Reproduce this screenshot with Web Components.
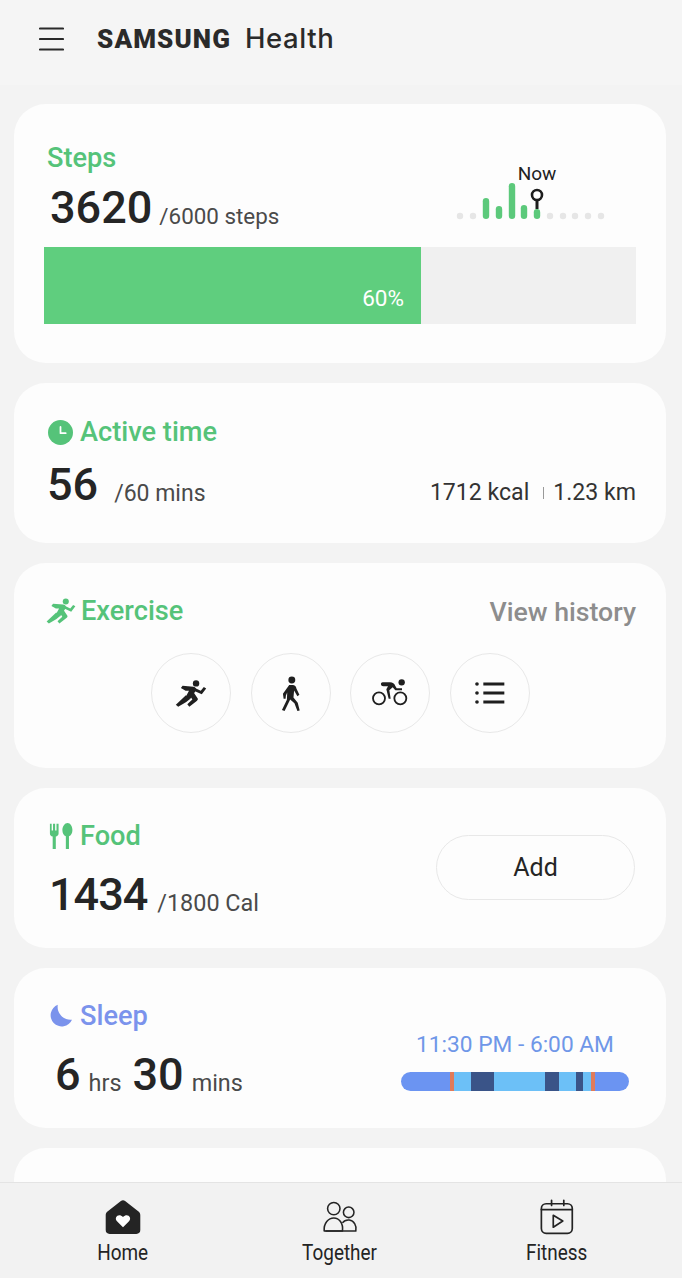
<!DOCTYPE html>
<html lang="en">
<head>
<meta charset="utf-8">
<title>Samsung Health</title>
<style>
  html, body { margin: 0; height: 100%; overflow: hidden; }
  body { font-family: Roboto, "Liberation Sans", sans-serif; color: #252525; background: #f3f3f3; }
  health-app { height: 1278px; }
</style>
</head>
<body>
<health-app>
  <health-header slot="header"></health-header>

  <health-card style="height:259px">
    <steps-panel></steps-panel>
  </health-card>

  <health-card style="height:160px">
    <card-title icon="clock" style="padding-top:33px">Active time</card-title>
    <active-panel></active-panel>
  </health-card>

  <health-card style="height:205px">
    <exercise-panel></exercise-panel>
  </health-card>

  <health-card style="height:160px">
    <food-panel></food-panel>
  </health-card>

  <health-card style="height:160px">
    <card-title icon="moon" tone="#7b93ec">Sleep</card-title>
    <sleep-panel></sleep-panel>
  </health-card>

  <health-card style="height:160px"></health-card>

  <bottom-nav slot="nav">
    <nav-item icon="home" active>Home</nav-item>
    <nav-item icon="together">Together</nav-item>
    <nav-item icon="fitness">Fitness</nav-item>
  </bottom-nav>
</health-app>

<script>
// every icon is drawn in the coordinates of the zoomed reference crop
const ICONS = {
  menu: `<svg viewBox="0 0 25 24" fill="none" stroke="currentColor" stroke-width="2.2" stroke-linecap="round"><path d="M1 1.5h23M1 12h23M1 22.5h23"/></svg>`,
  clock: `<svg viewBox="56 52 72 72"><circle cx="92" cy="88" r="36" fill="currentColor"/><path d="M92 72v18h15" fill="none" stroke="#fff" stroke-width="5" stroke-linecap="round" stroke-linejoin="round"/></svg>`,
  runner: `<svg viewBox="106 98 94 86" fill="currentColor"><circle cx="168" cy="111" r="9.5"/><path d="M128 118l32 3c7 1 10 6 7 12l-17 25-12-8 9-17-10 0-14-8z"/><path d="M138 146l12 11-11 9-24 14-7-6z"/><path d="M147 143l12-8 14 21c1 3 0 5-3 7l-22 17-6-7 15-14z"/><path d="M163 124l19 9 9-11 7 4-13 17-27-12z"/></svg>`,
  walker: `<svg viewBox="415 85 70 112" fill="currentColor"><circle cx="454" cy="100" r="10.5"/><path d="M446 115h12c7 1 9 5 10 11l9 19-6 4-10-17-2 21 13 16 6 24-7 1-9-23-13-12-17 35-8-3 15-31 1-22-4 9-1 10-6 0-2-15z"/></svg>`,
  cyclist: `<svg viewBox="36 26 108 84"><g fill="none" stroke="currentColor" stroke-width="5.5"><circle cx="57" cy="84" r="18"/><circle cx="121" cy="84" r="18"/></g><circle cx="125" cy="36" r="9.5" fill="currentColor"/><path d="M68 36h22c8 0 13 4 16 11l4 7h16v6h-20l-8-9-10 9 4 25h-6l-7-28 5-9H70c-8 0-10-12-2-12z" fill="currentColor"/></svg>`,
  list: `<svg viewBox="1002 104 96 78" fill="currentColor"><circle cx="1011" cy="116" r="5.5"/><circle cx="1011" cy="143" r="5.5"/><circle cx="1011" cy="170" r="5.5"/><path d="M1030 111.500h63v9h-63zM1030 138.500h63v9h-63zM1030 165.500h63v9h-63z"/></svg>`,
  food: `<svg viewBox="58 32 68 78" fill="currentColor"><path d="M60 34h5v20h4V34h6v20h4V34h6v28c0 5-4 8-8 9v36h-9V71c-5-1-8-4-8-9z"/><path d="M111 32c8 0 14 10 14 20 0 9-4 16-10 18v37h-9V70c-6-2-10-9-10-18 0-10 7-20 15-20z"/></svg>`,
  moon: `<svg viewBox="56 40 74 70" fill="currentColor"><path d="M85 42A33 33 0 1 0 127 86A38 38 0 0 1 85 42z"/></svg>`,
  home: `<svg viewBox="127 82 102 102"><path d="M172 88c4-3 8-3 12 0l37 29c4 3 6 6 6 11v42c0 7-4 11-11 11h-76c-7 0-11-4-11-11v-42c0-5 2-8 6-11z" fill="currentColor"/><path d="M178 162l-17-17c-10-11 5-25 17-12 12-13 27 1 17 12z" fill="#fff"/></svg>`,
  together: `<svg viewBox="740 82 116 102" fill="none" stroke="currentColor" stroke-width="5" stroke-linejoin="round"><circle cx="778" cy="106" r="20"/><circle cx="826" cy="118" r="17"/><path d="M747 178c-2-26 14-42 31-42 17 0 31 16 28 42z"/><path d="M806 152c6-8 14-10 22-9 15 2 25 18 21 35h-98"/></svg>`,
  fitness: `<svg viewBox="1366 80 102 106" fill="none" stroke="currentColor" stroke-width="5" stroke-linejoin="round" stroke-linecap="round"><rect x="1371" y="94" width="91" height="87" rx="14"/><path d="M1401 84v15M1437 84v15M1371 111h91" /><path d="M1406 128l28 17-28 18z"/></svg>`
};

function shadow(el, html) {
  el.attachShadow({ mode: 'open' }).innerHTML = html;
}

class HealthApp extends HTMLElement {
  constructor() {
    super();
    shadow(this, `
      <style>
        :host { display: flex; flex-direction: column; background: #f3f3f3; overflow: hidden; }
        header { flex: none; }
        .scroll { flex: 1; min-height: 0; overflow: hidden; display: flex; flex-direction: column; gap: 20px; padding: 19px 16px 0 14px; }
        footer { flex: none; }
      </style>
      <header><slot name="header"></slot></header>
      <div class="scroll"><slot></slot></div>
      <footer><slot name="nav"></slot></footer>`);
  }
}

class HealthHeader extends HTMLElement {
  constructor() {
    super();
    shadow(this, `
      <style>
        :host { display: flex; align-items: center; height: 85px; padding-left: 39px; background: #f5f5f5; color: #2a2a2a; }
        .menu { width: 25px; height: 24px; margin-right: 33px; margin-top: -8px; }
        svg { display: block; }
        .logo { display: flex; align-items: baseline; margin-top: -8px; }
        .brand { font: 900 26px/30px Roboto, sans-serif; letter-spacing: 1.1px; }
        .app { font: 500 27.5px/30px Inter, sans-serif; margin-left: 14px; letter-spacing: .6px; }
      </style>
      <div class="menu">${ICONS.menu}</div>
      <div class="logo"><span class="brand">SAMSUNG</span><span class="app">Health</span></div>`);
  }
}

class HealthCard extends HTMLElement {
  constructor() {
    super();
    shadow(this, `
      <style>
        :host { display: block; flex: none; box-sizing: border-box; background: #fdfdfd; border-radius: 32px; position: relative; }
      </style>
      <slot></slot>`);
  }
}

class CardTitle extends HTMLElement {
  connectedCallback() {
    if (this.shadowRoot) return;
    const name = this.getAttribute('icon');
    const tone = this.getAttribute('tone') || '#55c379';
    const ic = { clock: [25, 25, 34, 7], runner: [30, 28, 32, 5], food: [24, 27, 35, 7], moon: [25, 24, 34, 7] }[name];
    shadow(this, `
      <style>
        :host { display: flex; align-items: center; color: ${tone}; font: 500 27.2px/32px Roboto, sans-serif; padding: 32px 0 0 ${ic[2]}px; }
        .ic { flex: none; display: flex; justify-content: center; margin-right: ${ic[3]}px; }
        svg { display: block; width: 100%; height: 100%; }
      </style>
      <span class="ic" style="width:${ic[0]}px;height:${ic[1]}px">${ICONS[name]}</span>
      <slot></slot>`);
  }
}

class BigStat extends HTMLElement {
  connectedCallback() {
    if (this.shadowRoot) return;
    shadow(this, `
      <style>
        :host { display: inline-flex; align-items: baseline; white-space: nowrap; color: #252525; }
        b { font: 500 45px/50px Roboto, sans-serif; letter-spacing: var(--num-track, 0); }
        span { font: 400 var(--unit-size, 22.4px)/50px Roboto, sans-serif; color: #4a4a4a; margin-left: var(--unit-gap, 7px); position: relative; top: 1px; }
      </style>
      <b>${this.getAttribute('value')}</b><span><slot></slot></span>`);
  }
}

class StepsPanel extends HTMLElement {
  constructor() {
    super();
    const bars = [[486, 198], [499, 206], [512, 183], [524, 205], [537, 209]];
    const dots = [460, 473, 550, 563, 575, 588, 601];
    shadow(this, `
      <style>
        :host { display: block; padding: 38px 30px 0; }
        .top { display: flex; justify-content: space-between; height: 91px; }
        h2 { margin: 0 0 9px 3px; font: 500 27.2px/32px Roboto, sans-serif; color: #55c379; }
        big-stat { margin-left: 6px; }
        svg { display: block; margin: 18px 18px 0 0; overflow: visible; }
        .bar { height: 77px; margin-top: 14px; background: #f0f0f0; display: flex; }
        .fill { width: 377px; background: #5fce7e; color: #fff; font: 400 22.5px/1 Roboto, sans-serif; display: flex; align-items: flex-end; justify-content: flex-end; padding: 0 17px 15px 0; box-sizing: border-box; }
      </style>
      <div class="top">
        <div><h2>Steps</h2><big-stat value="3620">/6000 steps</big-stat></div>
        <svg width="178" height="70" viewBox="440 160 178 70">
          <text x="537" y="180" text-anchor="middle" font-family="Roboto, sans-serif" font-size="19" fill="#222">Now</text>
          ${dots.map(x => `<circle cx="${x}" cy="216" r="3.2" fill="#e6e6e6"/>`).join('')}
          ${bars.map(([x, y]) => `<rect x="${x - 3.2}" y="${y}" width="6.4" height="${219 - y}" rx="3.2" fill="#5cc97b"/>`).join('')}
          <path d="M537 199v10" stroke="#1d1d1d" stroke-width="3"/>
          <circle cx="537" cy="195" r="5" fill="#fff" stroke="#1d1d1d" stroke-width="2.6"/>
        </svg>
      </div>
      <div class="bar"><div class="fill">60%</div></div>`);
  }
}

class ActivePanel extends HTMLElement {
  constructor() {
    super();
    shadow(this, `
      <style>
        :host { display: flex; justify-content: space-between; align-items: baseline; padding: 12px 30px 0 33px; --unit-gap: 16px; --unit-size: 23px; }
        .right { font: 400 23.1px/50px Roboto, sans-serif; color: #333; display: flex; align-items: center; white-space: nowrap; }
        i { width: 1px; height: 12px; background: #999; margin: 0 9px 0 14px; }
      </style>
      <big-stat value="56">/60 mins</big-stat>
      <div class="right">1712 kcal<i></i>1.23 km</div>`);
  }
}

class RoundButton extends HTMLElement {
  connectedCallback() {
    if (this.shadowRoot) return;
    const [w, h] = this.getAttribute('size').split(',');
    shadow(this, `
      <style>
        :host { display: flex; align-items: center; justify-content: center; box-sizing: border-box; width: 80px; height: 80px; border: 1.5px solid #e8e8e8; border-radius: 50%; color: #1f1f1f; }
        span { display: block; width: ${w}px; height: ${h}px; }
        svg { display: block; width: 100%; height: 100%; }
      </style>
      <span>${ICONS[this.getAttribute('icon')]}</span>`);
  }
}

class ExercisePanel extends HTMLElement {
  constructor() {
    super();
    shadow(this, `
      <style>
        :host { display: block; }
        .head { display: flex; justify-content: space-between; align-items: flex-end; padding-right: 30px; }
        a { font: 500 26.7px/32px Roboto, sans-serif; color: #8d8d8d; position: relative; top: 1px; }
        .row { display: flex; justify-content: center; gap: 19.7px; margin-top: 26px; padding-left: 1px; }
      </style>
      <div class="head"><card-title icon="runner">Exercise</card-title><a>View history</a></div>
      <div class="row">
        <round-button icon="runner" size="32,29"></round-button>
        <round-button icon="walker" size="23,37"></round-button>
        <round-button icon="cyclist" size="36,28"></round-button>
        <round-button icon="list" size="32,26"></round-button>
      </div>`);
  }
}

class FoodPanel extends HTMLElement {
  constructor() {
    super();
    shadow(this, `
      <style>
        :host { display: flex; justify-content: space-between; align-items: flex-start; padding-right: 31px; }
        big-stat { margin: 18px 0 0 35px; display: flex; --unit-gap: 10px; --num-track: -1px; --unit-size: 23.4px; }
        button { all: unset; box-sizing: border-box; width: 199px; height: 65px; margin-top: 47px; border: 1.5px solid #e8e8e8; border-radius: 33px; text-align: center; font: 400 25px/62px Roboto, sans-serif; color: #252525; }
      </style>
      <div>
        <card-title icon="food">Food</card-title>
        <big-stat value="1434">/1800 Cal</big-stat>
      </div>
      <button>Add</button>`);
  }
}

class SleepPanel extends HTMLElement {
  constructor() {
    super();
    const segs = [[49, '#6b94f2'], [4, '#e07b5a'], [17, '#6cc0f7'], [23, '#3a5488'], [51, '#6cc0f7'], [14, '#3a5488'], [17, '#6cc0f7'], [7, '#3a5488'], [8, '#6cc0f7'], [4, '#e07b5a'], [34, '#6b94f2']];
    shadow(this, `
      <style>
        :host { display: flex; justify-content: space-between; align-items: flex-start; padding: 18px 37px 0 41px; }
        .val { display: flex; align-items: baseline; white-space: nowrap; font: 400 23.4px/50px Roboto, sans-serif; color: #4a4a4a; }
        b { font: 500 45px/50px Roboto, sans-serif; color: #252525; }
        .val span { margin: 0 11px 0 8px; position: relative; top: 1px; }
        .right { width: 228px; margin-top: -21px; }
        .time { font: 400 22.7px/32px Roboto, sans-serif; color: #6f97e8; text-align: center; white-space: nowrap; }
        .bar { display: flex; height: 19px; border-radius: 10px; overflow: hidden; margin-top: 11px; }
      </style>
      <div class="val"><b>6</b><span>hrs</span><b>30</b><span>mins</span></div>
      <div class="right">
        <div class="time">11:30 PM - 6:00 AM</div>
        <div class="bar">${segs.map(([w, c]) => `<i style="width:${w}px;background:${c}"></i>`).join('')}</div>
      </div>`);
  }
}

class BottomNav extends HTMLElement {
  constructor() {
    super();
    shadow(this, `
      <style>
        :host { display: grid; grid-template-columns: 246px 188px 246px; height: 96px; box-sizing: border-box; border-top: 1.5px solid #e4e4e4; background: #f2f2f2; position: relative; }
      </style>
      <slot></slot>`);
  }
}

class NavItem extends HTMLElement {
  connectedCallback() {
    if (this.shadowRoot) return;
    shadow(this, `
      <style>
        :host { display: flex; flex-direction: column; align-items: center; color: #242424; padding-top: 16px; }
        .ic { display: block; width: 36px; height: 36px; }
        svg { display: block; width: 100%; height: 100%; }
        .label { display: block; margin-top: 4px; font: 400 22px/28px Roboto, sans-serif; transform: scaleX(.86); white-space: nowrap; }
      </style>
      <span class="ic">${ICONS[this.getAttribute('icon')]}</span>
      <span class="label"><slot></slot></span>`);
  }
}

customElements.define('health-app', HealthApp);
customElements.define('health-header', HealthHeader);
customElements.define('health-card', HealthCard);
customElements.define('card-title', CardTitle);
customElements.define('big-stat', BigStat);
customElements.define('steps-panel', StepsPanel);
customElements.define('active-panel', ActivePanel);
customElements.define('round-button', RoundButton);
customElements.define('exercise-panel', ExercisePanel);
customElements.define('food-panel', FoodPanel);
customElements.define('sleep-panel', SleepPanel);
customElements.define('bottom-nav', BottomNav);
customElements.define('nav-item', NavItem);
</script>
</body>
</html>
